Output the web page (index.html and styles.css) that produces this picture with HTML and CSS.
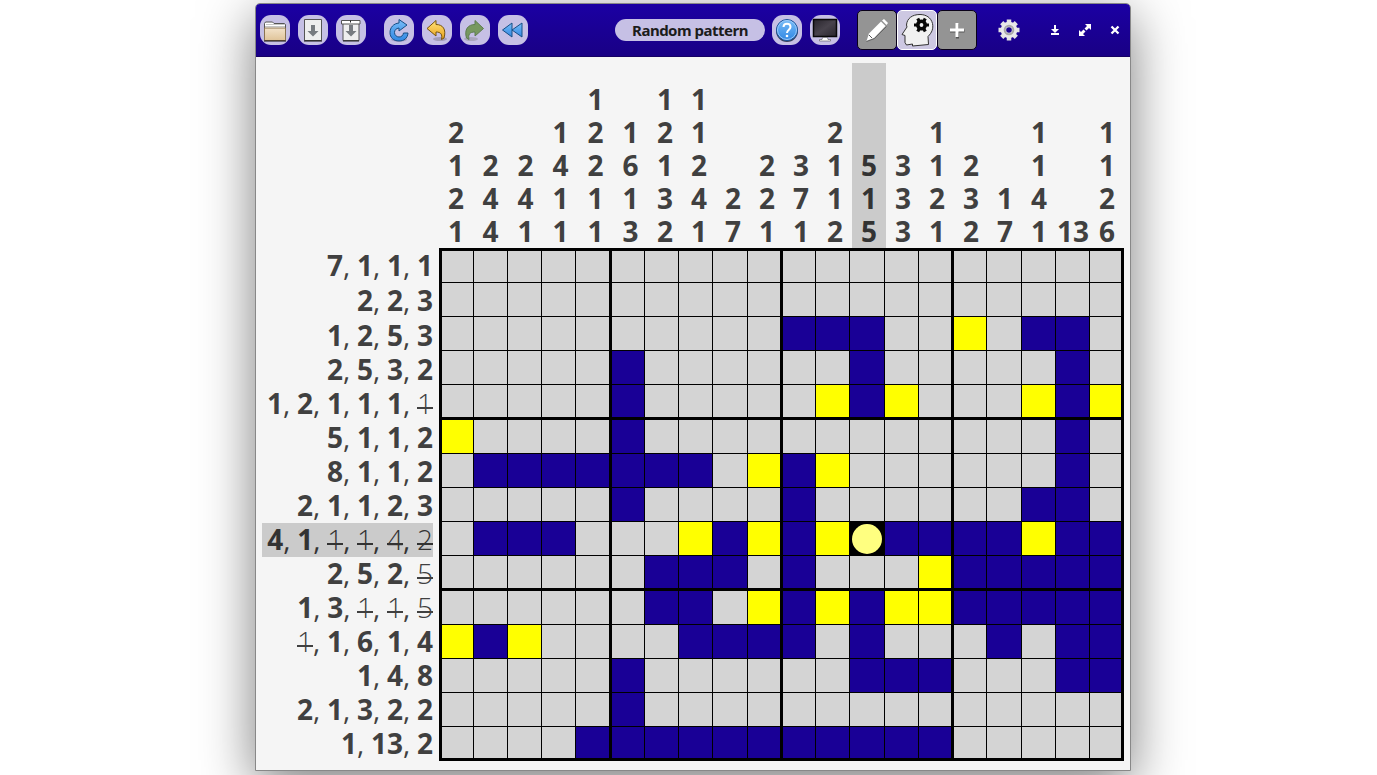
FILE: index.html
```
<!DOCTYPE html>
<html lang="en">
<head>
<meta charset="utf-8">
<title>Random pattern</title>
<link rel="stylesheet" href="styles.css">
</head>
<body>
<div class="window">
  <header class="toolbar">
    <div class="group files">
      <button class="tool" aria-label="Open"><svg viewBox="0 0 30 30"><path d="M4.500 22V8.500l1-1.500h7l1.500 1.500h10.500l1 1V22z" fill="#fff" stroke="#555"/><path d="M6 9.500h19M5 11.500h20" stroke="#c5c5c5"/><path d="M4.500 13h21v12.500h-21z" fill="url(#tan)" stroke="#8a7350"/><path d="M4 26h22" stroke="#111"/></svg></button>
      <button class="tool" aria-label="Save"><svg viewBox="0 0 30 30"><path d="M6.500 4.500h17v21h-17z" fill="#eee" stroke="#555"/><path d="M6 26h18" stroke="#111"/><path d="M13 10h4v6h3.500L15 21.500 9.500 16H13z" fill="#777b80"/></svg></button>
      <button class="tool" aria-label="Save as"><svg viewBox="0 0 30 30"><path d="M7 8h16v17.500H7z" fill="#eee" stroke="#555"/><path d="M5.500 5.500h18.500v3.500H5.500z" fill="#fff" stroke="#555"/><path d="M14.500 5.500v2M7 26h16" stroke="#222"/><path d="M13 10h4v6h3.500L15 21.500 9.500 16H13z" fill="#777b80"/></svg></button>
    </div>
    <div class="group history">
      <button class="tool" aria-label="Restart"><svg viewBox="0 0 30 30"><ellipse cx="15" cy="24.500" rx="8" ry="2" fill="#a09bc0"/><path d="M15 4.500l8 5.500-8 6v-3c-3 .5-4.500 2-4.500 4.500s2 4.500 4.500 4.500 4-1.500 4.500-4h4.500c-.5 5.500-4 8-9 8-5.500 0-9-3.500-9-8.500s3.500-9 9-9.500z" fill="url(#sky)" stroke="#174e85"/></svg></button>
      <button class="tool" aria-label="Undo"><svg viewBox="0 0 30 30"><ellipse cx="18" cy="24" rx="7" ry="2" fill="#a29db9"/><path d="M5 13.500L14 5.500v4c7 0 10.500 5 8 13.500l-2.500 1.500c1-5-.5-7.500-5.500-7.500v4z" fill="url(#gold)" stroke="#76530b"/></svg></button>
      <button class="tool" aria-label="Redo"><svg viewBox="0 0 30 30"><ellipse cx="11" cy="24" rx="7" ry="2" fill="#aaa6bd"/><path d="M23.500 13.500L15 5.500v4c-7 0-11 5-8.500 13.500L9 24.500c-1-5 .5-7.500 6-7.500v4z" fill="#77985f" stroke="#5e7c50"/></svg></button>
      <button class="tool" aria-label="Rewind"><svg viewBox="0 0 30 30"><path d="M4.500 15L14 8v14zM14 15l10-7v14z" fill="url(#sky)" stroke="#174e85"/></svg></button>
    </div>
    <h1 class="title">Random pattern</h1>
    <div class="group info">
      <button class="tool" aria-label="Help"><svg viewBox="0 0 30 30"><circle cx="15" cy="16" r="11" fill="#37415b"/><circle cx="15" cy="15" r="10.500" fill="url(#sky)" stroke="#1b559c"/><circle cx="15" cy="15" r="9.500" fill="none" stroke="#9bc9fa"/><path d="M11.500 12c0-4.500 7-4.500 7 0 0 2.500-3.500 3-3.500 6" fill="none" stroke="#fff" stroke-width="2"/><circle cx="15" cy="21" r="1.300" fill="#fff"/></svg></button>
      <button class="tool" aria-label="Screen"><svg viewBox="0 0 30 30"><path d="M3.500 4.500h23v17h-23z" fill="url(#screen)" stroke="#080808" stroke-width="1.500"/><path d="M12.500 22.500h5l.5 2h2.500v1.500h-11v-1.500h2.500z" fill="#fff" stroke="#555" stroke-width=".6"/></svg></button>
    </div>
    <div class="modes">
      <button class="mode" aria-label="Pencil"><svg viewBox="0 0 38 38"><path d="M8.500 30l2.500-7.500L23 10.500l4.500 4.500L16 27z" fill="#fff"/><path d="M24 9.500l2-1.500 4 4-1.500 2z" fill="#fff"/><path d="M11 24l3 3" stroke="#555"/><path d="M8.500 30.500l8-3 12-12" fill="none" stroke="#555" stroke-width=".8"/></svg></button>
      <button class="mode chosen" aria-label="Think"><svg viewBox="0 0 38 38"><path d="M14.500 35l16-1.500-.5-8c4-4 5.500-8 4.500-13C33 6.500 28 3.500 22 3.500c-8 0-13 4-13.500 10.500l.5 2-5 7.500 3 1v7l1.500 2.500 6-1z" fill="#f1f1f1" stroke="#333"/><g stroke="#080808" fill="none"><circle cx="23.500" cy="14" r="3.700" stroke-width="3.600"/><path d="M19.700 7.500l2 3.500M27.300 7.500l-2 3.500M31 14h-4M20 14h-4M19.700 20.500l2-3.500M27.300 20.500l-2-3.500" stroke-width="3.200"/></g></svg></button>
      <button class="mode" aria-label="Add"><svg viewBox="0 0 38 38"><path d="M12 20h14.500M19.500 12.500v15" stroke="#555" stroke-width="3"/><path d="M12 19h14M19 12v14" stroke="#fff" stroke-width="3"/></svg></button>
    </div>
    <button class="settings" aria-label="Settings"><svg viewBox="0 0 22 22"><g stroke="#e4e4e4" stroke-width="4.500"><path d="M11 .5v21M.5 11h21M3.700 3.700l14.600 14.600M18.300 3.700L3.700 18.300"/></g><circle cx="11" cy="11" r="8.300" fill="#e9e9e9"/><circle cx="11" cy="11" r="4.300" fill="none" stroke="#aaa" stroke-width="2"/><circle cx="11" cy="11" r="2.800" fill="#1a0090"/></svg></button>
    <div class="controls">
      <svg viewBox="0 0 12 12"><path d="M6 1v5M2 10h8" stroke="#fff" stroke-width="2"/><path d="M2 5h8L6 9z" fill="#fff"/></svg>
      <svg viewBox="0 0 12 12"><path d="M6 0h6v6l-2-2-2.500 2.500L5.500 4.500 8 2zM0 6l2 2 2.500-2.500 2 2L4 10l2 2H0z" fill="#fff"/></svg>
      <svg viewBox="0 0 12 12"><path d="M2.500 2.500l7 7M9.500 2.500l-7 7" stroke="#fff" stroke-width="2.300"/></svg>
    </div>
  </header>
  <main class="puzzle">
    <div class="top" id="top"></div>
    <div class="side" id="side"></div>
    <div class="board" id="board"></div>
  </main>
</div>
<svg class="defs"><defs>
  <linearGradient id="tan" x2="0" y2="1"><stop stop-color="#f3e3cb"/><stop offset="1" stop-color="#dfc398"/></linearGradient>
  <linearGradient id="sky" x2="0" y2="1"><stop stop-color="#79bdf8"/><stop offset="1" stop-color="#3087e3"/></linearGradient>
  <linearGradient id="gold" x2="0" y2="1"><stop stop-color="#ffe27a"/><stop offset="1" stop-color="#e8a11a"/></linearGradient>
  <linearGradient id="screen" x2="1" y2="1"><stop stop-color="#28242c"/><stop offset=".5" stop-color="#48434c"/><stop offset="1" stop-color="#29252d"/></linearGradient>
</defs></svg>
<script src="board.js"></script>
</body>
</html>
```
FILE: styles.css
```
* { box-sizing: border-box; }
body { margin: 0; height: 775px; overflow: hidden; background: #fff; font-family: "Open Sans", "Noto Sans", sans-serif; }
button { padding: 0; border: 0; background: none; display: block; }
svg { display: block; }
.defs { width: 0; height: 0; }
.window { width: 876px; height: 768px; margin: 3px 0 0 255px; border: 1px solid #888; border-radius: 5px 5px 0 0; background: #f5f5f5; box-shadow: 0 14px 54px rgba(0,0,0,.52); }
.toolbar { height: 53px; display: flex; align-items: center; padding-left: 4px; border-bottom: 1px solid #160064; border-radius: 4px 4px 0 0; background: linear-gradient(#1b00a3, #190085); }
.group { display: flex; gap: 8px; }
.history { margin-left: 18px; }
.info { margin-left: 7px; }
.tool { width: 30px; height: 30px; border-radius: 11px; background: #c6c0e5; }
.tool svg { width: 30px; height: 30px; }
.title { width: 150px; height: 22px; margin: 0 0 0 87px; border-radius: 11px; background: #c6c0e5; color: #1c1c1c; font: bold 15px/22px "Noto Sans", sans-serif; letter-spacing: -.5px; text-align: center; white-space: nowrap; }
.modes { display: flex; margin-left: 17px; }
.mode { width: 40px; height: 40px; border: 1px solid #090018; border-radius: 5px; background: #949494; }
.mode svg { width: 38px; height: 38px; }
.chosen { border-color: #fff; background: #cdc8e2; }
.settings { margin-left: 21px; }
.settings svg { width: 22px; height: 22px; }
.controls { display: flex; gap: 18px; margin-left: 29px; }
.controls svg { width: 12px; height: 12px; }
.puzzle { display: grid; grid-template: 185px 513px / 177px 685px; padding: 6px 0 0 6px; color: #404040; font-size: 28px; font-weight: 700; }
.top { grid-column: 2; display: grid; grid-template-columns: 34px repeat(5, 35px) repeat(14, 34px); }
.column { display: flex; flex-direction: column; justify-content: flex-end; align-items: center; line-height: 33px; }
.side { display: grid; grid-template-rows: repeat(3, 35px) repeat(12, 34px); width: 171px; }
.row { display: flex; justify-content: flex-end; line-height: 32px; white-space: pre; }
.row:nth-child(-n+3) { line-height: 34px; }
.current { background: #cbcbcb; color: #333; }
.comma, .done { font-weight: 400; }
.comma { letter-spacing: -.28px; }
.done { font-weight: 300; background: linear-gradient(currentColor, currentColor) 0 20px / 100% 2px no-repeat; }
.board { display: grid; grid-template-columns: 32px 34px 34px 34px 36px 33px 34px 34px 35px 35px 33px 34px 35px 34px 35px 33px 35px 34px 34px 31px; grid-template-rows: 32px 34px 34px 34px 35px 34px 34px 34px 34px 35px 34px 34px 34px 34px 31px; border: 3px solid #000; }
.cell { border: solid #000; border-width: 0 1px 1px 0; background: #d4d4d4; }
.cell:nth-child(5n) { border-right-width: 3px; }
.cell:nth-child(20n) { border-right-width: 0; }
.fifth { border-bottom-width: 3px; }
.last { border-bottom-width: 0; }
.filled { background: #190096; }
.crossed { background: #ff0; }
.cursor { display: flex; align-items: center; justify-content: center; background: #000; }
.dot { width: 30px; height: 30px; border-radius: 50%; background: #ffff80; }
```
FILE: board.js
```
const columns = ["2 1 2 1", "2 4 4", "2 4 1", "1 4 1 1", "1 2 2 1 1", "1 6 1 3", "1 2 1 3 2", "1 1 2 4 1", "2 7", "2 2 1", "3 7 1", "2 1 1 2", "5 1 5", "3 3 3", "1 1 2 1", "2 3 2", "1 7", "1 1 4 1", "13", "1 1 2 6"];
// A leading minus marks a completed clue.
const rows = ["7 1 1 1", "2 2 3", "1 2 5 3", "2 5 3 2", "1 2 1 1 1 -1", "5 1 1 2", "8 1 1 2", "2 1 1 2 3", "4 1 -1 -1 -4 -2", "2 5 2 -5", "1 3 -1 -1 -5", "-1 1 6 1 4", "1 4 8", "2 1 3 2 2", "1 13 2"];
const cells = [
  "....................",
  "....................",
  "..........###..y.##.",
  ".....#......#.....#.",
  ".....#.....y#y...y#y",
  "y....#............#.",
  ".#######.y#y......#.",
  ".....#....#......##.",
  ".###...y#y#yo####y##",
  "......###.#...y#####",
  "......##.y#y#yy#####",
  "y#y....####.#...#.##",
  ".....#......###...##",
  ".....#..............",
  "....###########....."
];

document.getElementById("top").innerHTML = columns.map((list, i) =>
  `<div class="column${i === 12 ? " current" : ""}">${list.split(" ").map(n => `<span>${n}</span>`).join("")}</div>`).join("");

document.getElementById("side").innerHTML = rows.map((list, i) =>
  `<div class="row${i === 8 ? " current" : ""}">${list.split(" ").map(n =>
    n < 0 ? `<span class="done">${-n}</span>` : `<span>${n}</span>`).join('<span class="comma">, </span>')}</div>`).join("");

const kinds = { ".": "", "#": " filled", "y": " crossed", "o": " cursor" };
document.getElementById("board").innerHTML = cells.map((line, r) =>
  [...line].map(c => `<div class="cell${kinds[c]}${r === 4 || r === 9 ? " fifth" : r === 14 ? " last" : ""}">${c === "o" ? '<div class="dot"></div>' : ""}</div>`).join("")).join("");
```
